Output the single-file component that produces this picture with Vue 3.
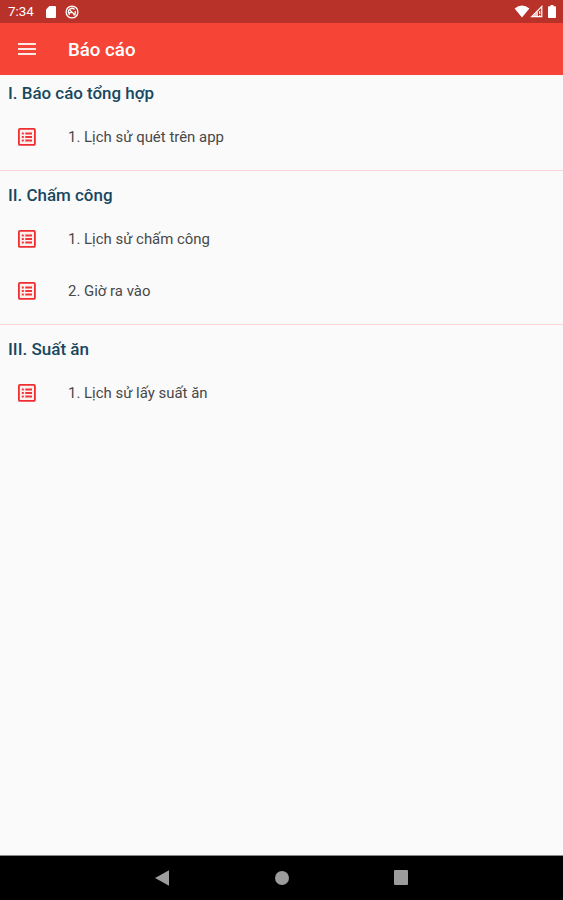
<script setup>
const sections = [
  { title: 'I. Báo cáo tổng hợp', width: 146, items: [{ label: '1. Lịch sử quét trên app', width: 156 }] },
  {
    title: 'II. Chấm công',
    width: 104.5,
    items: [
      { label: '1. Lịch sử chấm công', width: 142 },
      { label: '2. Giờ ra vào', width: 82.5 },
    ],
  },
  { title: 'III. Suất ăn', width: 81, items: [{ label: '1. Lịch sử lấy suất ăn', width: 139.5 }] },
]
</script>

<template>
  <div class="screen">
    <header class="status">
      <span class="time">7:34</span>
      <svg class="sd" width="10" height="12" viewBox="0 0 10 12">
        <path d="M3.4 0H9a1 1 0 0 1 1 1v10a1 1 0 0 1-1 1H1a1 1 0 0 1-1-1V3.4z" fill="#fff" />
      </svg>
      <svg class="sync" width="14" height="14" viewBox="0 0 14 14" fill="none" stroke="#fff">
        <circle cx="7" cy="7" r="5.9" stroke-width="1.3" />
        <path d="M3.8 8.4A3.5 3.5 0 0 1 9.5 4.5M10.2 6A3.5 3.5 0 0 1 8.5 10.1M5 5.200l5.500 5.200M4.2 10V7.6h2.5" stroke-width="1.3" />
      </svg>
      <div class="signals">
        <svg width="16" height="13" viewBox="0 0 16 13">
          <path d="M0.6 3.4Q8 -2.2 15.4 3.4L8 12.6z" fill="#fff" />
        </svg>
        <svg width="13" height="13" viewBox="0 0 13 13">
          <path d="M1.7 11.7L11.8 1.5v10.2z" fill="none" stroke="#fff" stroke-width="1.2" />
          <path d="M2 12l6-6v6z" fill="#fff" fill-opacity=".75" />
          <path d="M9.7 6v3M9.7 10v1.3" stroke="#fff" stroke-width="1.2" />
        </svg>
        <svg class="battery" width="8" height="13" viewBox="0 0 8 13">
          <path d="M2.5 0h3v1.3H7a1 1 0 0 1 1 1V12a1 1 0 0 1-1 1H1a1 1 0 0 1-1-1V2.300a1 1 0 0 1 1-1h1.500z" fill="#fff" />
        </svg>
      </div>
    </header>

    <div class="appbar">
      <svg class="menu" width="18" height="12" viewBox="0 0 18 12">
        <path d="M0 1h18M0 6h18M0 11h18" stroke="#ffe9e6" stroke-width="2.200" />
      </svg>
      <h1>Báo cáo</h1>
    </div>

    <main>
      <section v-for="s in sections" :key="s.title">
        <h2>
          <svg :width="s.width + 4" height="28">
            <text x="0" y="20" :textLength="s.width" lengthAdjust="spacingAndGlyphs">{{ s.title }}</text>
          </svg>
        </h2>
        <div v-for="item in s.items" :key="item.label" class="row">
          <svg class="list-icon" width="18" height="18" viewBox="0 0 18 18">
            <rect x="0.900" y="0.900" width="16" height="16" rx="1" fill="#fff0f0" stroke="#ee2f32" stroke-width="1.800" />
            <path d="M3.800 5.500h2M3.800 9h2M3.800 12.500h2M7.300 5.500h6.700M7.300 9h6.700M7.300 12.500h6.700" stroke="#ee3538" stroke-width="1.800" />
          </svg>
          <svg class="label" :width="item.width + 4" height="28">
            <text x="0" y="19" :textLength="item.width" lengthAdjust="spacingAndGlyphs">{{ item.label }}</text>
          </svg>
        </div>
      </section>
    </main>

    <nav>
      <svg width="14" height="16" viewBox="0 0 14 16"><path d="M0 8L14 0.300v15.400z" fill="#9c9c9c" /></svg>
      <svg width="14" height="14" viewBox="0 0 14 14"><circle cx="7" cy="7" r="7" fill="#9c9c9c" /></svg>
      <svg width="14" height="15" viewBox="0 0 14 15"><rect width="14" height="15" rx="1" fill="#9c9c9c" /></svg>
    </nav>
  </div>
</template>

<style>
body {
  margin: 0;
}
</style>

<style scoped>
.screen {
  width: 563px;
  height: 900px;
  display: flex;
  flex-direction: column;
  overflow: hidden;
  background: #fafafa;
  font-family: Roboto, sans-serif;
}
svg {
  display: block;
  flex: none;
}
.status {
  height: 23px;
  flex: none;
  box-sizing: border-box;
  display: flex;
  align-items: center;
  padding: 1px 7px 0 8px;
  background: #b93229;
  color: #fff;
}
.time {
  width: 38px;
  font-size: 13.400px;
  font-weight: 400;
  line-height: 22px;
}
.sync {
  margin-left: 9px;
}
.signals {
  display: flex;
  margin-left: auto;
  margin-top: -2px;
}
.battery {
  margin-left: 5px;
}
.appbar {
  height: 52px;
  flex: none;
  display: flex;
  align-items: center;
  padding-left: 18px;
  background: #f64537;
  color: #fff;
}
.menu {
  margin-top: -1px;
}
h1 {
  margin: 2px 0 0 32px;
  font-size: 18.700px;
  font-weight: 500;
  line-height: 50px;
}
main {
  flex: 1;
}
section {
  padding-bottom: 6.500px;
}
section + section {
  border-top: 1px solid #f9d5da;
  padding-top: 6px;
}
h2 {
  margin: 0;
  height: 36px;
  display: flex;
  align-items: center;
  padding-left: 8px;
}
h2 text {
  font-size: 16px;
  font-weight: 500;
  fill: #164760;
}
.row {
  height: 52.400px;
  display: flex;
  align-items: center;
  padding-left: 18px;
}
.label {
  margin-left: 32px;
}
.label text {
  font-size: 14.500px;
  fill: #484848;
}
nav {
  height: 45px;
  flex: none;
  box-sizing: border-box;
  display: flex;
  align-items: center;
  justify-content: space-between;
  padding: 0 155px 1px;
  border-top: 1px solid #888;
  background: #000;
}
</style>
